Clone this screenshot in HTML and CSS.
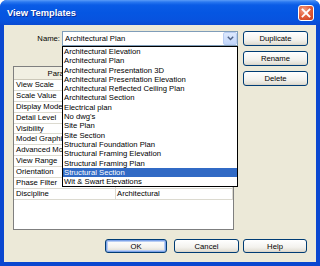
FILE: index.html
```html
<!DOCTYPE html>
<html>
<head>
<meta charset="utf-8">
<link rel="stylesheet" href="styles.css">
</head>
<body>
<div class="window">
  <div class="titlebar">
    <span class="title">View Templates</span>
    <span class="close"><svg width="10" height="10" viewBox="0 0 10 10"><path d="M1.5 1.5 L8.5 8.5 M8.5 1.5 L1.5 8.5" stroke="#fff" stroke-width="1.8" stroke-linecap="square"/></svg></span>
  </div>
  <div class="client">
    <div class="main">
      <div class="left">
        <div class="name-row">
          <label class="name-label">Name:</label>
          <div class="combo">
            <span class="combo-text">Architectural Plan</span>
            <span class="arrow"><svg width="7" height="5" viewBox="0 0 7 5"><path d="M0.8 0.8 L3.5 3.6 L6.2 0.8" fill="none" stroke="#4d6185" stroke-width="1.4"/></svg></span>
            <ul class="dropdown">
              <li>Architectural Elevation</li>
              <li>Architectural Plan</li>
              <li>Architectural Presentation 3D</li>
              <li>Architectural Presentation Elevation</li>
              <li>Architectural Reflected Ceiling Plan</li>
              <li>Architectural Section</li>
              <li>Electrical plan</li>
              <li>No dwg's</li>
              <li>Site Plan</li>
              <li>Site Section</li>
              <li>Structural Foundation Plan</li>
              <li>Structural Framing Elevation</li>
              <li>Structural Framing Plan</li>
              <li class="selected">Structural Section</li>
              <li>Wit &amp; Swart Elevations</li>
            </ul>
          </div>
        </div>
        <div class="grid">
          <div class="row head"><div class="cell">Parameter</div><div class="cell"></div></div>
          <div class="row"><div class="cell">View Scale</div><div class="cell"></div></div>
          <div class="row"><div class="cell">Scale Value</div><div class="cell"></div></div>
          <div class="row"><div class="cell">Display Model</div><div class="cell"></div></div>
          <div class="row"><div class="cell">Detail Level</div><div class="cell"></div></div>
          <div class="row"><div class="cell">Visibility</div><div class="cell"></div></div>
          <div class="row"><div class="cell">Model Graphics</div><div class="cell"></div></div>
          <div class="row"><div class="cell">Advanced Model</div><div class="cell"></div></div>
          <div class="row"><div class="cell">View Range</div><div class="cell"></div></div>
          <div class="row"><div class="cell">Orientation</div><div class="cell"></div></div>
          <div class="row"><div class="cell">Phase Filter</div><div class="cell"></div></div>
          <div class="row"><div class="cell">Discipline</div><div class="cell value">Architectural</div></div>
        </div>
      </div>
      <div class="side">
        <button class="btn">Duplicate</button>
        <button class="btn">Rename</button>
        <button class="btn">Delete</button>
      </div>
    </div>
    <div class="footer">
      <button class="btn default ok">OK</button>
      <button class="btn cancel">Cancel</button>
      <button class="btn help">Help</button>
    </div>
  </div>
</div>
</body>
</html>
```
FILE: styles.css
```css
body {
  margin: 0;
  background: #ffffff;
  font-family: "Liberation Sans", Arial, sans-serif;
  font-size: 7.7px;
  color: #000;
}
.window {
  width: 320px;
  height: 266px;
  display: flex;
  flex-direction: column;
  border-radius: 7px 7px 0 0;
  overflow: hidden;
  background: #0a47d0;
}
.titlebar {
  height: 25px;
  flex: none;
  display: flex;
  align-items: center;
  justify-content: space-between;
  padding: 0 6px 0 7px;
  background: linear-gradient(#5b9cf8 0, #2a78f0 2px, #0a5ce6 5px, #0556e2 50%, #0753df 80%, #0a4ad2 100%);
}
.title {
  color: #fff;
  font-weight: bold;
  font-size: 9.3px;
  text-shadow: 1px 1px 0 #0b2f9c;
}
.close {
  width: 14px;
  height: 14px;
  border: 1px solid #fff;
  border-radius: 3px;
  background: radial-gradient(circle at 35% 30%, #f2a28a 0, #e4623e 45%, #c8391a 100%);
  display: flex;
  align-items: center;
  justify-content: center;
  margin-top: 1px;
}
.client {
  flex: 1;
  margin: 0 4px 4px 4px;
  background: #ece9d8;
  padding: 6px 8px 0 9px;
}
.main {
  display: flex;
  gap: 5px;
}
.left {
  width: 225px;
}
.name-row {
  display: flex;
  align-items: center;
  height: 15px;
}
.name-label {
  width: 47px;
  text-align: right;
  margin-right: 2px;
}
.combo {
  position: relative;
  width: 176px;
  height: 15px;
  box-sizing: border-box;
  border: 1px solid #7f9db9;
  background: #fff;
  display: flex;
  align-items: center;
  padding-left: 2px;
}
.combo-text {
  flex: 1;
}
.arrow {
  width: 14px;
  height: 13px;
  box-sizing: border-box;
  border: 1px solid #b9cdf3;
  border-radius: 2px;
  background: linear-gradient(#dde9fd, #c2d6fb);
  display: flex;
  align-items: center;
  justify-content: center;
}
.dropdown {
  position: absolute;
  left: -1px;
  top: 14px;
  width: 176px;
  box-sizing: border-box;
  margin: 0;
  padding: 0;
  list-style: none;
  border: 1px solid #000;
  background: #fff;
  z-index: 5;
}
.dropdown li {
  height: 9.3px;
  line-height: 9.3px;
  padding-left: 1px;
  white-space: nowrap;
}
.dropdown li.selected {
  background: #316ac5;
  color: #fff;
}
.grid {
  margin-top: 20px;
  width: 221px;
  height: 164px;
  box-sizing: border-box;
  border: 1px solid #7f7f7f;
  background: #fff;
}
.row {
  display: grid;
  grid-template-columns: 102px 1fr;
  height: 10.9px;
  box-sizing: border-box;
}
.row .cell {
  border-bottom: 1px solid #dcdad0;
  border-right: 1px solid #dcdad0;
  padding-left: 2px;
  white-space: nowrap;
  overflow: hidden;
  line-height: 10px;
}
.row.head {
  height: 13px;
}
.row.head .cell {
  background: #f1efe2;
  text-align: center;
  line-height: 13px;
  border-bottom: 1px solid #cbc7b8;
  border-right: 1px solid #cbc7b8;
}
.cell.value {
  padding-left: 1px;
}
.side {
  display: flex;
  flex-direction: column;
  gap: 5px;
}
.btn {
  font-family: inherit;
  font-size: 7.7px;
  width: 65px;
  height: 15px;
  padding: 0;
  box-sizing: border-box;
  border: 1px solid #003c74;
  border-radius: 3px;
  background: linear-gradient(#ffffff, #f3f2ee 60%, #e3e0d6 90%, #d6d0c5);
  color: #000;
}
.footer {
  display: flex;
  justify-content: flex-end;
  margin-top: 9px;
  padding-right: 1px;
}
.footer .btn {
  height: 14px;
}
.ok {
  width: 62px;
  margin-right: 7px;
}
.cancel {
  width: 65px;
  margin-right: 4px;
}
.help {
  width: 64px;
}
.default {
  box-shadow: inset 0 0 0 1px #7ea3e8, inset 0 0 0 2px #b8cdf3;
}
```
